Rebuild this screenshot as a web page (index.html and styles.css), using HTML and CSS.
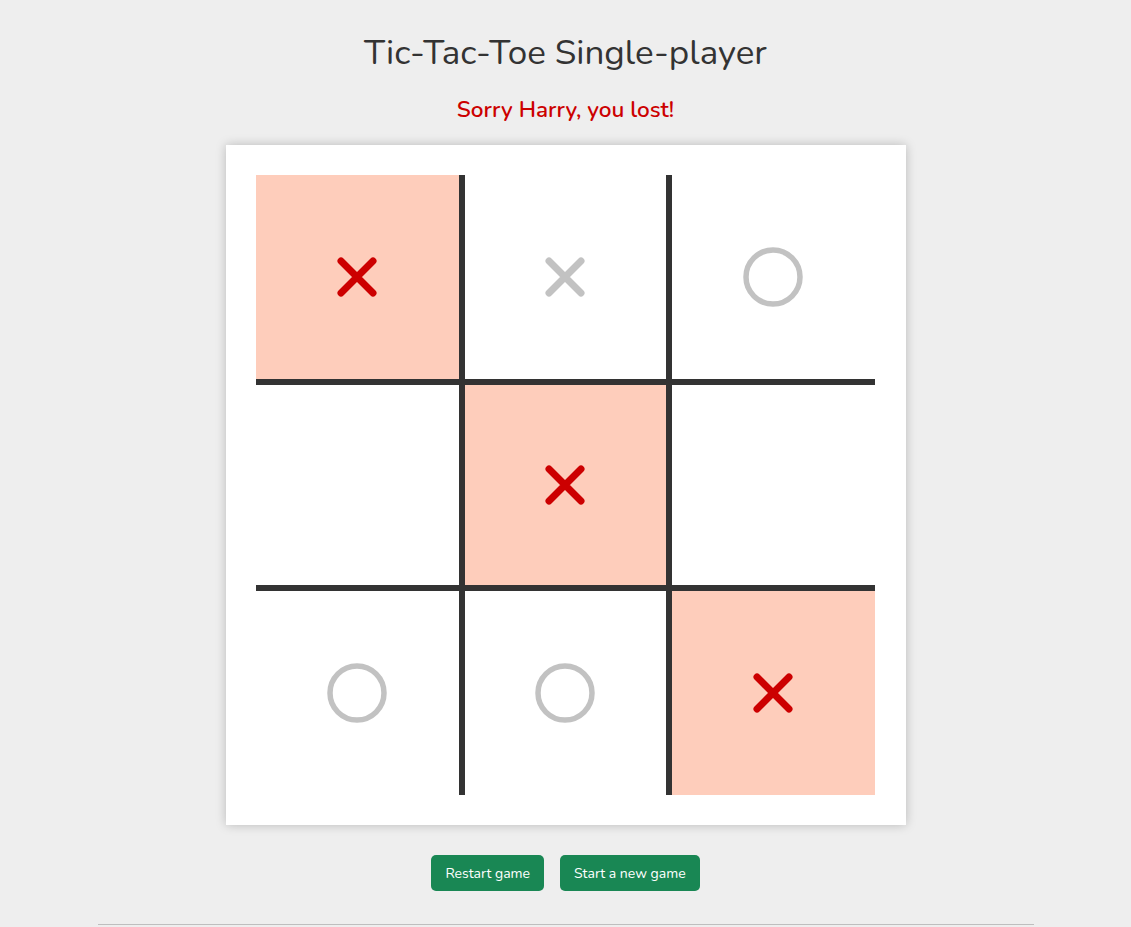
FILE: index.html
```html
<!DOCTYPE html>
<html lang="en">
<head>
<meta charset="utf-8">
<title>Tic-Tac-Toe Single-player</title>
<link rel="stylesheet" href="styles.css">
</head>
<body>
<div class="container">
  <h1 class="title">Tic-Tac-Toe Single-player</h1>
  <p class="status">Sorry Harry, you lost!</p>
  <div class="board">
    <div class="grid">
      <div class="cell win"><svg class="mark" viewBox="0 0 40 40"><path class="x-red" d="M4 4 L36 36 M36 4 L4 36"/></svg></div>
      <div class="cell"><svg class="mark" viewBox="0 0 40 40"><path class="x-grey" d="M4 4 L36 36 M36 4 L4 36"/></svg></div>
      <div class="cell"><svg class="ring" viewBox="0 0 60 60"><circle cx="30" cy="30" r="27"/></svg></div>
      <div class="cell"></div>
      <div class="cell win"><svg class="mark" viewBox="0 0 40 40"><path class="x-red" d="M4 4 L36 36 M36 4 L4 36"/></svg></div>
      <div class="cell"></div>
      <div class="cell"><svg class="ring" viewBox="0 0 60 60"><circle cx="30" cy="30" r="27"/></svg></div>
      <div class="cell"><svg class="ring" viewBox="0 0 60 60"><circle cx="30" cy="30" r="27"/></svg></div>
      <div class="cell win"><svg class="mark" viewBox="0 0 40 40"><path class="x-red" d="M4 4 L36 36 M36 4 L4 36"/></svg></div>
    </div>
  </div>
  <div class="actions">
    <button class="btn" type="button">Restart game</button>
    <button class="btn" type="button">Start a new game</button>
  </div>
  <hr class="rule">
</div>
</body>
</html>
```
FILE: styles.css
```css
html, body {
  margin: 0;
  padding: 0;
}
body {
  background: #eeeeee;
  font-family: "Nunito", "Lato", "Noto Sans", sans-serif;
  color: #333333;
}
.container {
  width: 936px;
  margin: 0 auto;
  display: flex;
  flex-direction: column;
  align-items: center;
}
.title {
  margin: 32px 0 0;
  font-size: 35px;
  font-weight: 400;
  line-height: 1.2;
  color: #333333;
}
.status {
  margin: 22px 0 0;
  font-size: 22.5px;
  font-weight: 600;
  line-height: 1.2;
  color: #cc0000;
}
.board {
  margin-top: 22px;
  width: 680px;
  height: 680px;
  box-sizing: border-box;
  padding: 30px;
  background: #ffffff;
  box-shadow: 0 0 10px rgba(0, 0, 0, 0.22);
}
.grid {
  display: grid;
  grid-template-columns: 203px 201px 203px;
  grid-template-rows: 204px 200px 204px;
  gap: 6px;
  width: 619px;
  background: #333333;
  border-radius: 3px;
}
.cell {
  background: #ffffff;
  display: flex;
  align-items: center;
  justify-content: center;
}
.cell.win {
  background: #fecdbb;
}
.mark {
  width: 40px;
  height: 40px;
}
.mark path {
  fill: none;
  stroke-width: 7;
  stroke-linecap: round;
}
.x-red {
  stroke: #cc0000;
}
.x-grey {
  stroke: #c2c2c2;
}
.ring {
  width: 60px;
  height: 60px;
}
.ring circle {
  fill: none;
  stroke: #c2c2c2;
  stroke-width: 5.5;
}
.actions {
  margin-top: 30px;
  display: flex;
  gap: 16px;
}
.btn {
  height: 36px;
  padding: 0 14px;
  border: none;
  border-radius: 5px;
  background: #198754;
  color: #ffffff;
  font-family: inherit;
  font-size: 14px;
  font-weight: 400;
}
.rule {
  width: 936px;
  margin: 33px 0 0;
  border: none;
  border-top: 1px solid #bebebe;
}
```
